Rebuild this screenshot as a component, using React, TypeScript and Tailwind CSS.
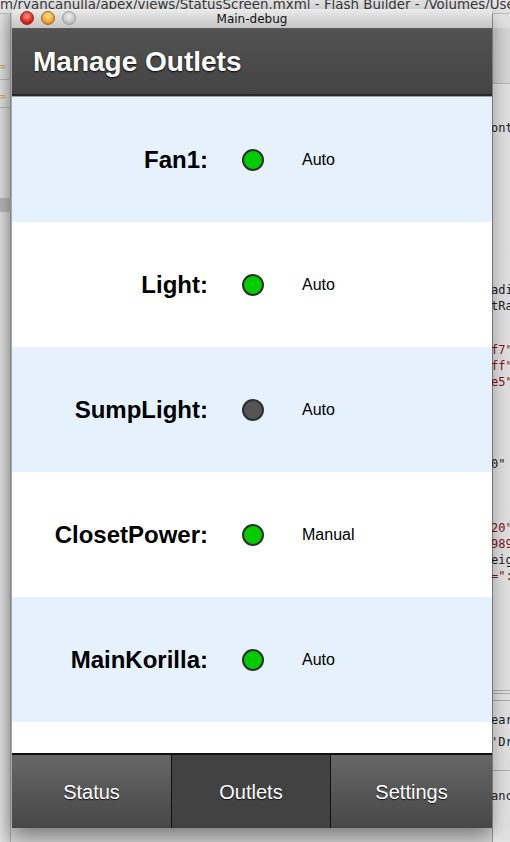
import React from "react";

const outlets = [
  { name: "Fan1:", on: true, mode: "Auto" },
  { name: "Light:", on: true, mode: "Auto" },
  { name: "SumpLight:", on: false, mode: "Auto" },
  { name: "ClosetPower:", on: true, mode: "Manual" },
  { name: "MainKorilla:", on: true, mode: "Auto" },
];

const codeBits: { top: number; text: string; red?: boolean }[] = [
  { top: 122, text: "onte" },
  { top: 284, text: "adiu" },
  { top: 300, text: "tRad" },
  { top: 344, text: "f7\"", red: true },
  { top: 360, text: "ff\"", red: true },
  { top: 376, text: "e5\"", red: true },
  { top: 458, text: "0\" c" },
  { top: 522, text: "20\"", red: true },
  { top: 538, text: "989", red: true },
  { top: 554, text: "eigh" },
  { top: 570, text: "=\":", red: true },
  { top: 714, text: "earc" },
  { top: 736, text: "'Dro" },
  { top: 790, text: "anc" },
];

function Light({ on }: { on: boolean }) {
  return (
    <div
      className={
        "w-[22px] h-[22px] rounded-full border-2 border-[#2e2e2e] " +
        (on ? "bg-[#00cc00]" : "bg-[#555555]")
      }
    />
  );
}

export default function App() {
  return (
    <div
      className="relative w-[510px] h-[842px] overflow-hidden bg-[#d6d6d6]"
      style={{ fontFamily: '"Liberation Sans", Arial, sans-serif' }}
    >
      {/* background IDE */}
      <div className="absolute left-0 top-0 w-[510px] h-[14px] bg-[#e6e6e6] border-b border-[#bdbdbd]">
        <div
          className="absolute left-0 top-[-5px] whitespace-nowrap text-[13.4px] text-[#3a3a3a]"
          style={{ fontFamily: '"DejaVu Sans", sans-serif' }}
        >
          m/ryancanulla/apex/views/StatusScreen.mxml - Flash Builder - /Volumes/Users/ryan
        </div>
      </div>
      <div className="absolute left-0 top-[14px] w-[11px] h-[828px] bg-gradient-to-r from-[#e2e2e2] to-[#cfcfcf] border-r border-[#a8a8a8]">
        <div className="absolute left-0 top-[38px] w-[11px] h-[28px] border-b border-[#b5b5b5]" />
        <div className="absolute left-0 top-[66px] w-[11px] h-[28px] border-b border-[#b5b5b5]" />
        <div className="absolute left-[-6px] top-[45px] text-[14px] leading-none text-[#c9a23a]">⇦</div>
        <div className="absolute left-[-6px] top-[75px] text-[14px] leading-none text-[#c9a23a]">⇦</div>
        <div className="absolute left-0 top-[184px] w-[11px] h-[14px] bg-[#b5b5b5]" />
      </div>
      <div className="absolute left-[492px] top-[14px] w-[18px] h-[828px] bg-gradient-to-r from-[#eeeeee] to-[#e2e2e2] border-l border-[#9a9a9a]">
        <div className="absolute left-0 top-[14px] w-[18px] h-[56px] bg-[#d8d8d8] border-b border-[#bdbdbd]" />
        <div className="absolute left-0 top-[676px] w-[18px] h-[4px] border-y border-[#b0b0b0]" />
        <div className="absolute left-0 top-[686px] w-[18px] border-t border-[#b0b0b0]" />
        <div className="absolute left-0 top-[756px] w-[18px] border-t border-[#b0b0b0]" />
      </div>
      {codeBits.map((c, i) => (
        <div
          key={i}
          className={
            "absolute left-[491px] whitespace-nowrap text-[12px] leading-none " +
            (c.red ? "text-[#8a1515]" : "text-[#222222]")
          }
          style={{ top: c.top, fontFamily: '"DejaVu Sans Mono", monospace' }}
        >
          {c.text}
        </div>
      ))}

      {/* window */}
      <div className="absolute left-[12px] top-[9px] w-[480px] h-[819px] flex flex-col shadow-[0_8px_20px_rgba(0,0,0,0.45)]">
        {/* title bar */}
        <div className="h-[20px] shrink-0 relative flex items-center justify-center bg-gradient-to-b from-[#ececec] to-[#c4c4c4] rounded-t-[4px] border-b border-[#5a5a5a]">
          <div className="absolute left-[8px] top-[2px] flex gap-[7px]">
            <div className="w-[14px] h-[14px] rounded-full bg-[radial-gradient(circle_at_50%_35%,#ff9a8a,#e0241b_60%,#9c0f0a)] border border-[#8a2a20]" />
            <div className="w-[14px] h-[14px] rounded-full bg-[radial-gradient(circle_at_50%_35%,#ffe2a0,#f4a12a_60%,#b86a10)] border border-[#9a6a20]" />
            <div className="w-[14px] h-[14px] rounded-full bg-[radial-gradient(circle_at_50%_35%,#eeeeee,#c6c6c6_60%,#9c9c9c)] border border-[#9a9a9a]" />
          </div>
          <span
            className="text-[12px] text-[#111]"
            style={{ fontFamily: '"DejaVu Sans", sans-serif' }}
          >
            Main-debug
          </span>
        </div>
        {/* app header */}
        <div className="h-[67px] shrink-0 flex items-center pl-[21px] bg-gradient-to-b from-[#525252] to-[#444444] border-b-2 border-[#2a2a2a]">
          <span className="text-[28px] font-bold text-white [text-shadow:0_1px_2px_rgba(0,0,0,0.9)]">
            Manage Outlets
          </span>
        </div>
        {/* list */}
        <div className="flex-1 flex flex-col overflow-hidden bg-white border-t border-[#9aa4ad]">
          {outlets.map((o, i) => (
            <div
              key={o.name}
              className={
                "h-[125px] shrink-0 flex items-center " +
                (i % 2 === 0 ? "bg-[#e5f1fd]" : "bg-white")
              }
            >
              <div className="w-[196px] text-right text-[24px] font-bold text-black">{o.name}</div>
              <div className="w-[90px] flex justify-center">
                <Light on={o.on} />
              </div>
              <div className="pl-[4px] text-[16px] text-black">{o.mode}</div>
            </div>
          ))}
        </div>
        {/* tab bar */}
        <div className="h-[75px] shrink-0 flex border-t-2 border-[#111] bg-[#111]">
          <div className="w-[160px] flex items-center justify-center bg-gradient-to-b from-[#676767] to-[#474747] border-r border-[#111]">
            <span className="text-[20px] text-white [text-shadow:0_1px_1px_rgba(0,0,0,0.8)]">Status</span>
          </div>
          <div className="w-[159px] flex items-center justify-center bg-[#424242] border-r border-[#111]">
            <span className="text-[20px] text-white [text-shadow:0_1px_1px_rgba(0,0,0,0.8)]">Outlets</span>
          </div>
          <div className="flex-1 flex items-center justify-center bg-gradient-to-b from-[#676767] to-[#474747]">
            <span className="text-[20px] text-white [text-shadow:0_1px_1px_rgba(0,0,0,0.8)]">Settings</span>
          </div>
        </div>
      </div>
    </div>
  );
}
